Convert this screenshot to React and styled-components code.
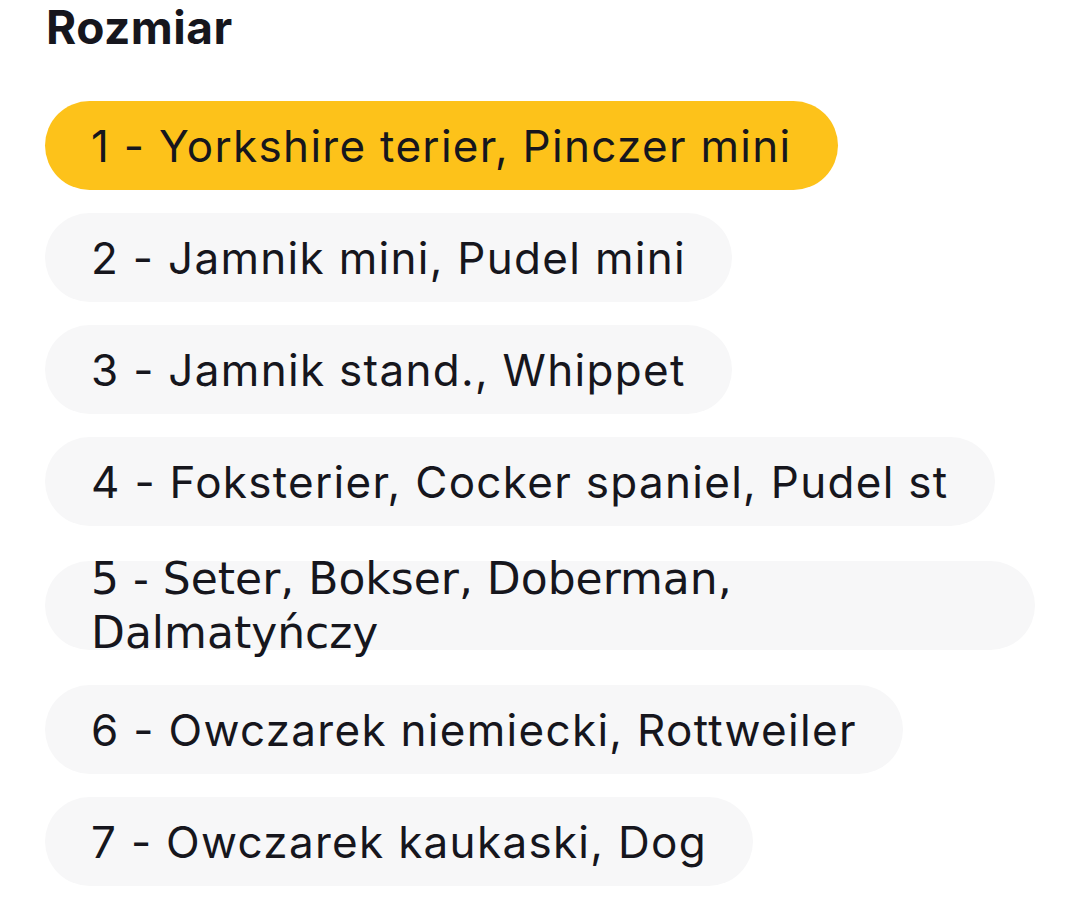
import styled, { createGlobalStyle } from "styled-components";

const GlobalStyle = createGlobalStyle`
  body {
    margin: 0;
    background: #ffffff;
    font-family: Inter, "Noto Sans", sans-serif;
    color: #16161d;
  }
`;

const Page = styled.div`
  width: 1080px;
  height: 918px;
  padding: 0 45px;
  box-sizing: border-box;
  overflow: hidden;
`;

const Title = styled.h2`
  margin: 0;
  padding: 1px 0 0 1px;
  font-size: 46px;
  font-weight: 700;
  line-height: 52px;
  letter-spacing: 0.5px;
`;

const List = styled.div`
  display: flex;
  flex-direction: column;
  align-items: flex-start;
  gap: 23px;
  margin-top: 48px;
`;

const Chip = styled.div`
  box-sizing: border-box;
  height: 89px;
  max-width: 100%;
  padding: 0 46px;
  border-radius: 45px;
  display: flex;
  align-items: center;
  background: ${({ $active }) => ($active ? "#fdc21a" : "#f7f7f8")};
  font-size: ${({ $fallback }) => ($fallback ? "44px" : "44px")};
  letter-spacing: ${({ $fallback }) => ($fallback ? "0" : "1.3px")};
  font-family: ${({ $fallback }) =>
    $fallback ? '"DejaVu Sans", sans-serif' : 'Inter, "Noto Sans", sans-serif'};
  line-height: 54px;
  margin: ${({ $spaced }) => ($spaced ? "12px 0" : "0")};
  width: ${({ $fallback }) => ($fallback ? "100%" : "auto")};
  white-space: ${({ $fallback }) => ($fallback ? "normal" : "nowrap")};
`;

const sizes = [
  { text: "1 - Yorkshire terier, Pinczer mini", active: true },
  { text: "2 - Jamnik mini, Pudel mini" },
  { text: "3 - Jamnik stand., Whippet" },
  { text: "4 - Foksterier, Cocker spaniel, Pudel st" },
  { text: "5 - Seter, Bokser, Doberman, Dalmatyńczy", fallback: true },
  { text: "6 - Owczarek niemiecki, Rottweiler" },
  { text: "7 - Owczarek kaukaski, Dog" },
];

export default function App() {
  return (
    <Page>
      <GlobalStyle />
      <Title>Rozmiar</Title>
      <List>
        {sizes.map((s) => (
          <Chip
            key={s.text}
            $active={s.active}
            $fallback={s.fallback}
            $spaced={s.fallback}
          >
            {s.text}
          </Chip>
        ))}
      </List>
    </Page>
  );
}
